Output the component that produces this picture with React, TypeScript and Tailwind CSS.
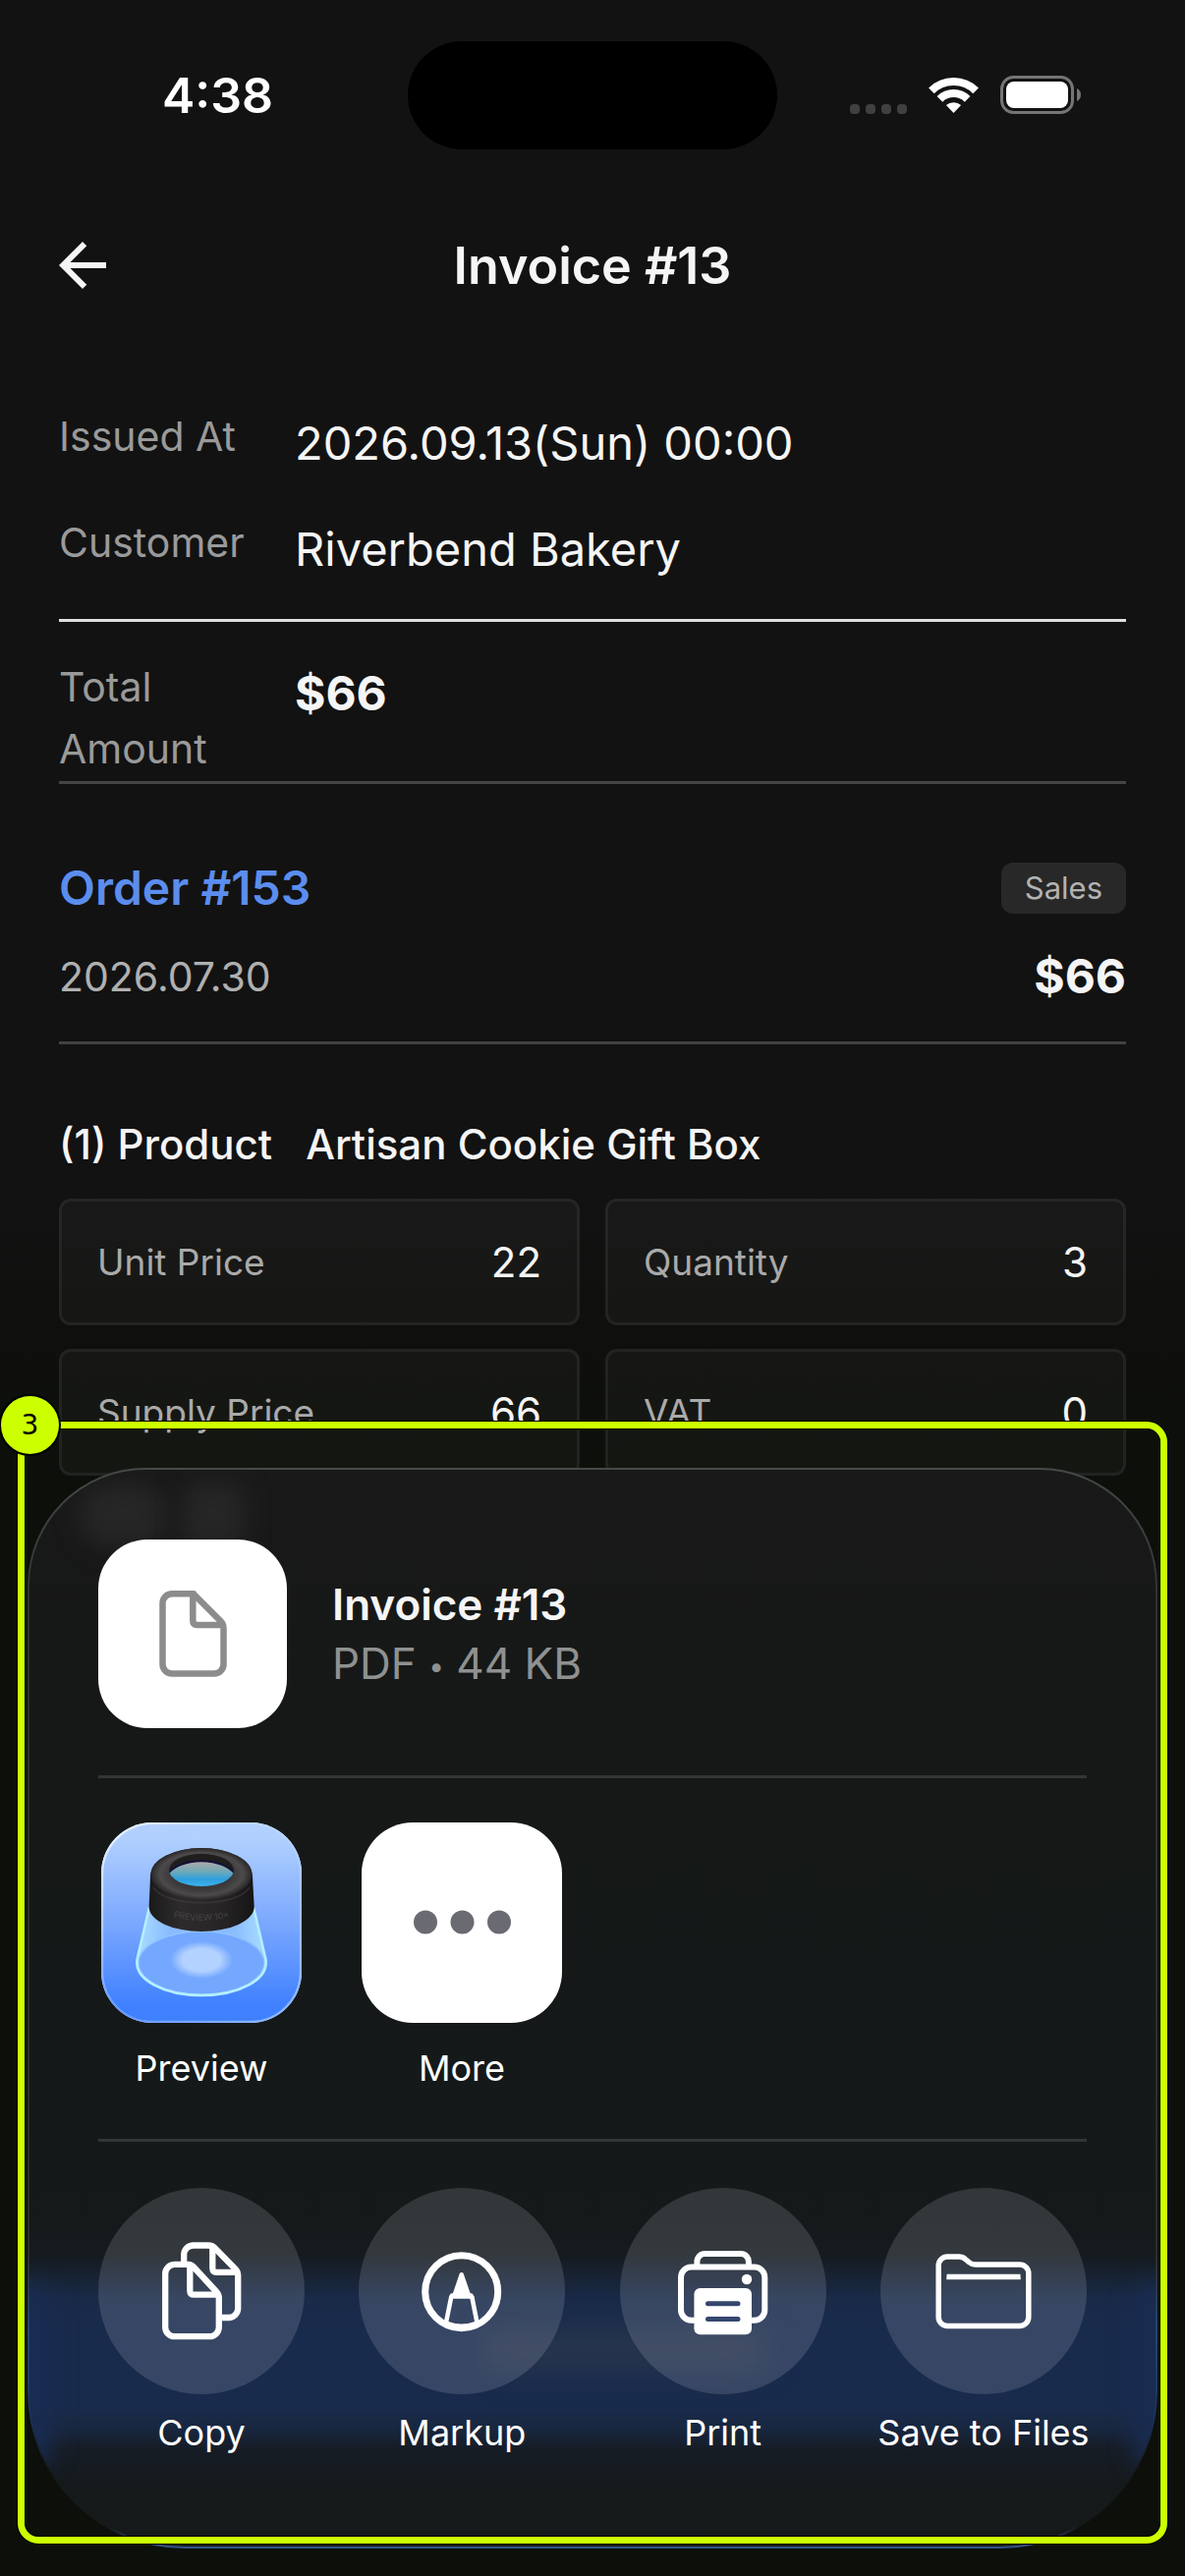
import {ReactNode} from "react";

interface AmountCell {
	label: string;
	value: string;
}

const amounts: AmountCell[] = [
	{label: "Unit Price", value: "22"},
	{label: "Quantity", value: "3"},
	{label: "Supply Price", value: "66"},
	{label: "VAT", value: "0"},
];

function StatusBar() {
	return (
		<div className="grid grid-cols-[1fr_376px_1fr] items-center pt-[42px]">
			<div className="pl-7 text-center text-[50px] leading-[60px] font-semibold text-white">4:38</div>
			<div className="h-[110px] rounded-full bg-black"/>
			<div className="flex items-center justify-center gap-[22px] pr-8">
				<div className="flex gap-[6px] pt-7">
					<span className="size-[10px] rounded-[4px] bg-[#404040]"/>
					<span className="size-[10px] rounded-[4px] bg-[#404040]"/>
					<span className="size-[10px] rounded-[4px] bg-[#404040]"/>
					<span className="size-[10px] rounded-[4px] bg-[#404040]"/>
				</div>
				<svg width="51" height="38" viewBox="0 0 51 38" fill="none" stroke="#fff" strokeWidth="8">
					<path d="M2.9 14.4a32 32 0 0 1 45.2 0"/>
					<path d="M11.4 22.9a20 20 0 0 1 28.2 0"/>
					<path d="M25.5 37l-7.6-8a11.5 11.5 0 0 1 15.2 0z" fill="#fff" stroke="none"/>
				</svg>
				<svg width="82" height="40" viewBox="0 0 82 40" fill="none">
					<rect x="1.5" y="1.5" width="72" height="36" rx="12" stroke="#757575" strokeWidth="3"/>
					<rect x="6" y="6" width="63" height="27" rx="8" fill="#fff"/>
					<path d="M78 13c2.500 1 4 3.500 4 6.500s-1.500 5.500-4 6.500z" fill="#757575"/>
				</svg>
			</div>
		</div>
	);
}

function Field({label, children}: { label: string; children: ReactNode }) {
	return (
		<div className="flex gap-6">
			<dt className="w-[216px] shrink-0 text-[41px] leading-[63px] text-[#9a9a9a]">{label}</dt>
			<dd className="text-[47px] leading-[76px] text-[#f5f5f5]">{children}</dd>
		</div>
	);
}

function DocumentGlyph() {
	return (
		<svg className="size-full" viewBox="0 0 192 192" fill="none" stroke="#8c8c8c" strokeWidth="6.5"
			 strokeLinejoin="round">
			<path d="M97 55.300H75a9.500 9.500 0 0 0-9.500 9.500V127a9.500 9.500 0 0 0 9.500 9.500h43a9.500 9.500 0 0 0 9.500-9.500V90c0-3-1-5-3-7l-25-25c-1.500-1.500-2-2.700-5-2.700z"/>
			<path d="M96.300 56v26.500c0 3 1.500 4.500 4.500 4.500H127"/>
		</svg>
	);
}

function PreviewIcon() {
	return (
		<svg className="size-full" viewBox="0 0 204 204">
			<defs>
				<linearGradient id="tile" x1="0" y1="0" x2="0" y2="1">
					<stop offset="0.08" stopColor="#b1d0ff"/>
					<stop offset="0.5" stopColor="#7ba8ff"/>
					<stop offset="0.92" stopColor="#3f80ff"/>
				</linearGradient>
				<linearGradient id="rim" x1="0" y1="0" x2="1" y2="1">
					<stop offset="0" stopColor="#fff" stopOpacity="0.8"/>
					<stop offset="0.5" stopColor="#bcd6ff" stopOpacity="0.3"/>
					<stop offset="1" stopColor="#cfe2ff" stopOpacity="0.6"/>
				</linearGradient>
				<linearGradient id="cone" x1="0" y1="0" x2="1" y2="0">
					<stop offset="0" stopColor="#b5e8ff"/>
					<stop offset="0.25" stopColor="#8dc0ff"/>
					<stop offset="0.75" stopColor="#8dc0ff"/>
					<stop offset="1" stopColor="#b5e8ff"/>
				</linearGradient>
				<linearGradient id="barrel" x1="0" y1="0" x2="1" y2="0">
					<stop offset="0" stopColor="#1b1a1b"/>
					<stop offset="0.3" stopColor="#2d2b2c"/>
					<stop offset="0.7" stopColor="#262425"/>
					<stop offset="1" stopColor="#161516"/>
				</linearGradient>
				<radialGradient id="ring" cx="0.5" cy="0.5" r="0.5">
					<stop offset="0.6" stopColor="#3a3839"/>
					<stop offset="0.82" stopColor="#4d4a4b"/>
					<stop offset="1" stopColor="#282627"/>
				</radialGradient>
				<linearGradient id="lens" x1="0" y1="0" x2="0" y2="1">
					<stop offset="0" stopColor="#b3aaa8"/>
					<stop offset="0.35" stopColor="#6fa9b8"/>
					<stop offset="0.6" stopColor="#2f9fdc"/>
					<stop offset="1" stopColor="#45bdf7"/>
				</linearGradient>
				<radialGradient id="glow">
					<stop offset="0.6" stopColor="#b4d2ff"/>
					<stop offset="1" stopColor="#b4d2ff" stopOpacity="0"/>
				</radialGradient>
				<clipPath id="opening">
					<ellipse cx="102" cy="48.500" rx="33" ry="16.500"/>
				</clipPath>
			</defs>
			<rect width="204" height="204" fill="url(#tile)"/>
			<rect x="1" y="1" width="202" height="202" rx="51" fill="none" stroke="url(#rim)" strokeWidth="2.500"/>
			<path d="M49 86L36.600 139C33 160 64 176 102 176s69-16 65.400-37L155 86z" fill="url(#cone)" opacity="0.85"/>
			<ellipse cx="102" cy="143" rx="64" ry="32" fill="#74a8ff" stroke="#8fc2ff" strokeWidth="1.500"/>
			<path d="M49 86L36.600 139C33 160 64 176 102 176s69-16 65.400-37L155 86" fill="none" stroke="#b4f0ff"
				  strokeWidth="2.500"/>
			<ellipse cx="102" cy="140" rx="32" ry="19" fill="url(#glow)"/>
			<path d="M50 55a52 29 0 0 1 104 0l1.700 31a53.500 25 0 0 1-107.100 0z" fill="url(#barrel)"/>
			<ellipse cx="102" cy="52.500" rx="51.500" ry="26.500" fill="url(#ring)"/>
			<ellipse cx="102" cy="48.500" rx="33" ry="16.500" fill="#1f1d1e"/>
			<g clipPath="url(#opening)">
				<path d="M66 55C78 34 126 34 138 55V70H66z" fill="url(#lens)" stroke="#14103a" strokeWidth="2"/>
			</g>
			<path d="M53 66c12 21 86 21 98 0" fill="none" stroke="#444243" strokeWidth="1.500" opacity="0.6"/>
			<path id="engraving" d="M66 94q36 12 72 0" fill="none"/>
			<text fontFamily="Inter, sans-serif" fontSize="9" fill="#454344">
				<textPath href="#engraving" startOffset="50%" textAnchor="middle">PREVIEW 10×</textPath>
			</text>
		</svg>
	);
}

function MoreIcon() {
	return (
		<svg className="size-full" viewBox="0 0 204 204" fill="#6a6a72">
			<circle cx="65" cy="101.500" r="12"/>
			<circle cx="102.500" cy="101.500" r="12"/>
			<circle cx="140" cy="101.500" r="12"/>
		</svg>
	);
}

function CopyIcon() {
	return (
		<svg className="size-full" viewBox="0 0 210 210" fill="none" stroke="#fff" strokeWidth="6.300"
			 strokeLinejoin="round">
			<path d="M87.200 75V68a9.500 9.500 0 0 1 9.500-9.500H112c3 0 4.500.500 6.500 2.500l21 21.500c2 2 2.700 3.500 2.700 6.500v33.500a9.500 9.500 0 0 1-9.500 9.500H126"/>
			<path d="M116.300 60v21.500c0 3 1.200 4.300 4.200 4.300H141"/>
			<path d="M92 77.900H77.700a9.500 9.500 0 0 0-9.500 9.500v54.300a9.500 9.500 0 0 0 9.500 9.500h35.600a9.500 9.500 0 0 0 9.500-9.500V112c0-3-.700-4.500-2.700-6.500L97.500 81c-1.800-2-3-3.100-5.500-3.100z"/>
			<path d="M93.300 79v25.500c0 3 1.200 4.200 4.200 4.200H122"/>
		</svg>
	);
}

function MarkupIcon() {
	return (
		<svg className="size-full" viewBox="0 0 210 210" fill="none" stroke="#fff" strokeWidth="4.500"
			 strokeLinejoin="round">
			<circle cx="104.700" cy="105.700" r="37" strokeWidth="7"/>
			<path d="M102.600 87.500c.700-2 3.500-2 4.200 0l6.700 19.500c3 .500 4 2 4 5.700H92c0-3.700 1-5.200 4-5.700z" fill="#fff"
				  stroke="none"/>
			<path d="M94.300 110.500L89 137M115.200 110.500l5.300 26.500"/>
			<path d="M89 137q15.700 6 31.500 0" strokeWidth="3"/>
		</svg>
	);
}

function PrintIcon() {
	return (
		<svg className="size-full" viewBox="0 0 210 210" fill="none" stroke="#fff" strokeWidth="6">
			<path d="M78.400 79v-4a8 8 0 0 1 8-8h36.500a8 8 0 0 1 8 8v4"/>
			<path d="M76 134.700h-3.500a10.500 10.500 0 0 1-10.500-10.500V91a10.500 10.500 0 0 1 10.500-10.500h64.300A10.500 10.500 0 0 1 147.300 91v33.200a10.500 10.500 0 0 1-10.500 10.500H133"/>
			<rect x="75.400" y="102" width="58.600" height="47.300" rx="6" fill="#fff" stroke="none"/>
			<circle cx="129" cy="93" r="5.200" fill="#fff" stroke="none"/>
			<path d="M89.500 117.700h30.500M89.500 133.500h30.500" stroke="#35476d" strokeWidth="5" strokeLinecap="round"/>
		</svg>
	);
}

function FolderIcon() {
	return (
		<svg className="size-full" viewBox="0 0 210 210" fill="none" stroke="#fff" strokeWidth="5.500"
			 strokeLinejoin="round">
			<path d="M59.200 79a9 9 0 0 1 9-9H80c3 0 4.500.700 6.500 2.500l3.500 3c2 1.700 3.500 2.500 6.500 2.500h45.300a9 9 0 0 1 9 9v44.500a9 9 0 0 1-9 9H68.200a9 9 0 0 1-9-9z"/>
			<path d="M67.500 93v-1a3 3 0 0 1 3-3h69a3 3 0 0 1 3 3v1z" fill="#fff" stroke="none"/>
			<path d="M67.500 90.500h75" strokeWidth="5.500"/>
		</svg>
	);
}

function AppTarget({label, children}: { label: string; children: ReactNode }) {
	return (
		<button className="flex w-[210px] flex-col items-center gap-[22px]">
			<span className="block size-[204px] overflow-hidden rounded-[52px] bg-white">{children}</span>
			<span className="text-[36px] leading-[48px] whitespace-nowrap text-white">{label}</span>
		</button>
	);
}

function Action({label, children}: { label: string; children: ReactNode }) {
	return (
		<button className="flex w-[210px] flex-col items-center gap-[15px]">
			<span className="block size-[210px] rounded-full bg-[#f4f4ff]/14">{children}</span>
			<span className="text-[36px] leading-[48px] whitespace-nowrap text-white">{label}</span>
		</button>
	);
}

function ShareSheet() {
	return (
		<section aria-label="Share"
				 className="relative overflow-hidden rounded-t-[120px] rounded-b-[160px] border-2 border-transparent [background:linear-gradient(to_bottom,#181918_0%,#151817_30%,#14191a_70%,#151b1f_73%,#192a48_77%,#192b4c_80%,#192b4c_87%,#182740_89%,#161c25_91%,#151a1c_94%,#151919_100%)_padding-box,linear-gradient(to_bottom,#464947_0%,#2f3231_12%,#2b2e2d_73%,#23457a_80%,#1b3158_88%,#151919_93%,#151919_98%,#33568f_100%)_border-box] px-[70px] pt-[71px] pb-[92px]">
			{/* content of the page showing through the glass */}
			<div className="absolute top-[14px] left-[50px] h-[64px] w-[90px] rounded-full bg-[#262626] blur-md"/>
			<div className="absolute top-[14px] left-[156px] h-[64px] w-[62px] rounded-lg bg-[#262626] blur-md"/>
			<div className="absolute top-[878px] left-[460px] h-[36px] w-[290px] rounded-full bg-[#35404d]/60 blur-lg"/>
			<div className="absolute top-[830px] -left-[24px] h-[190px] w-[46px] rounded-full bg-[#192c52] blur-md"/>
			<div className="absolute top-[830px] -right-[24px] h-[190px] w-[46px] rounded-full bg-[#192c52] blur-md"/>

			<div className="relative">
				<div className="flex items-center gap-[46px]">
					<div className="size-[192px] rounded-[50px] bg-white"><DocumentGlyph/></div>
					<div className="text-[44px] leading-[60px]">
						<h2 className="font-semibold text-[#f5f5f5]">Invoice #13</h2>
						<p className="text-[#8f9191]">PDF <span className="align-[3px] text-[28px] leading-none">•</span> 44 KB</p>
					</div>
				</div>

				<hr className="mt-12 mb-[45px] border-t-3 border-[#343534]"/>

				<div className="flex gap-[55px]">
					<AppTarget label="Preview"><PreviewIcon/></AppTarget>
					<AppTarget label="More"><MoreIcon/></AppTarget>
				</div>

				<hr className="mt-12 mb-[47px] border-t-3 border-[#313636]"/>

				<div className="flex justify-between">
					<Action label="Copy"><CopyIcon/></Action>
					<Action label="Markup"><MarkupIcon/></Action>
					<Action label="Print"><PrintIcon/></Action>
					<Action label="Save to Files"><FolderIcon/></Action>
				</div>
			</div>
		</section>
	);
}

export default function App() {
	return (
		<div className="relative min-h-screen overflow-hidden bg-[linear-gradient(to_bottom,#121212_45%,#0d0f0b_56%)] font-[Inter,sans-serif] text-[#f5f5f5]">
			<StatusBar/>

			<header className="mt-[34px] grid h-[168px] grid-cols-[1fr_auto_1fr] items-center px-12">
				<button aria-label="Back" className="size-[72px]">
					<svg className="size-full" viewBox="0 0 24 24" fill="#f5f5f5">
						<path d="M20 11H7.830l5.590-5.590L12 4l-8 8 8 8 1.410-1.410L7.830 13H20z"/>
					</svg>
				</button>
				<h1 className="pt-[2px] text-[52px] leading-[72px] font-semibold">Invoice #13</h1>
			</header>

			<main className="px-[60px] pt-[59px]">
				<dl className="flex flex-col gap-8 border-b-[3px] border-[#dfdfdf] pb-[33px]">
					<Field label="Issued At">2026.09.13(Sun) 00:00</Field>
					<Field label="Customer">Riverbend Bakery</Field>
				</dl>
				<dl className="border-b-[3px] border-[#444] pt-[35px] pb-px">
					<Field label="Total Amount"><span className="text-[48px] font-bold">$66</span></Field>
				</dl>

				<section className="flex flex-col gap-[18px] border-b-[3px] border-[#414141] pt-[70px] pb-[30px]">
					<div className="flex items-center justify-between">
						<a href="#order-153" className="text-[48px] leading-[72px] font-semibold text-[#5b8def]">Order
							#153</a>
						<span className="rounded-xl bg-[#282828] px-6 py-[6px] text-[31px] leading-[40px] text-[#b3b3b3]">Sales</span>
					</div>
					<div className="flex items-center justify-between leading-[72px]">
						<span className="text-[41px] text-[#b0b0b0]">2026.07.30</span>
						<span className="text-[48px] font-bold">$66</span>
					</div>
				</section>

				<section className="pt-[70px]">
					<h3 className="flex gap-[34px] text-[42px] leading-[63px] font-medium">
						<span>(1) Product</span>
						<span>Artisan Cookie Gift Box</span>
					</h3>
					<dl className="mt-6 grid grid-cols-2 gap-x-[26px] gap-y-6">
						{amounts.map(({label, value}) => (
							<div key={label}
								 className="flex items-center justify-between rounded-xl border-[3px] border-white/6 bg-white/3 px-9 py-[30px] leading-[63px]">
								<dt className="text-[37px] text-[#aaa]">{label}</dt>
								<dd className="text-[42px]">{value}</dd>
							</div>
						))}
					</dl>
				</section>
			</main>

			<div className="absolute inset-x-7 bottom-7">
				<ShareSheet/>
				{/* numbered highlight */}
				<div className="pointer-events-none absolute -inset-x-[11px] -top-12 bottom-1 rounded-[22px] border border-black">
					<div className="size-full rounded-[21px] border-7 border-[#ccff00]">
						<div className="size-full rounded-[14px] border border-black"/>
					</div>
				</div>
				<div className="absolute -top-[75px] -left-[29px] flex size-[63px] items-center justify-center rounded-full border-2 border-black bg-[#ccff00] font-['DejaVu_Sans',sans-serif] text-[28px] leading-none text-black">3
				</div>
			</div>
		</div>
	);
}
